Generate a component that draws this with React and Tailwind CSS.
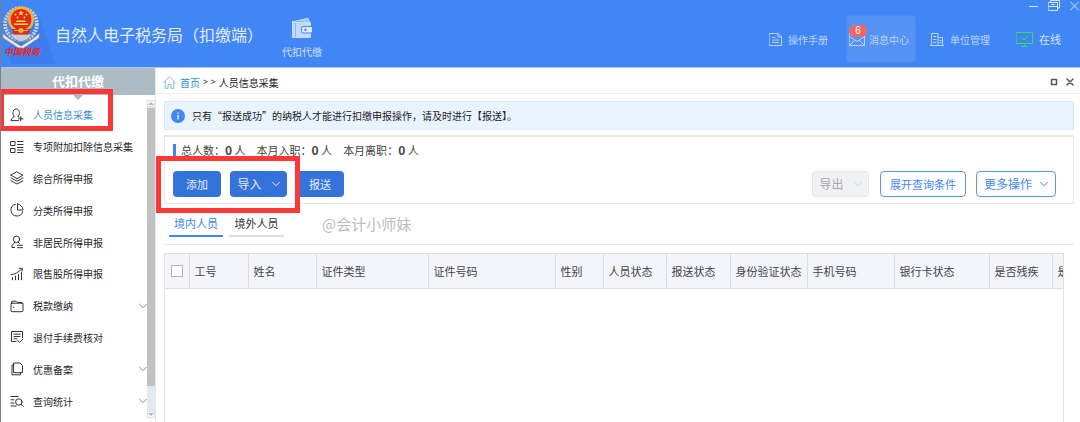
import React from "react";

function Icon({ className = "w-[14px] h-[14px]", children, box = "0 0 14 14", w = 1 }) {
  return (
    <svg
      viewBox={box}
      className={`${className} shrink-0`}
      fill="none"
      stroke="currentColor"
      strokeWidth={w}
      strokeLinecap="round"
      strokeLinejoin="round"
      aria-hidden="true"
    >
      {children}
    </svg>
  );
}

function Chevron({ className = "w-2 h-2" }) {
  return (
    <Icon className={className} box="0 0 8 8">
      <path d="M.5 2.200 4 5.700 7.500 2.200" />
    </Icon>
  );
}

const MENU = [
  {
    label: "人员信息采集",
    active: true,
    icon: (
      <>
        <path d="M4.2 8.3C3.2 7.3 3 6 3 4.7 3 2.6 4.3 1 6.2 1s3.2 1.6 3.2 3.7c0 1.300-.3 2.400-1.200 3.400" />
        <path d="M4.200 8.300C4.400 9.700 1 9.800 1 12.600h7.500M8.200 8.100l.6 1" />
        <path d="M10.800 8.500v4.500M8.500 10.800h4.500" />
      </>
    ),
  },
  {
    label: "专项附加扣除信息采集",
    icon: (
      <>
        <rect x="1" y="1.500" width="4" height="4" />
        <rect x="1" y="8.500" width="4" height="4" />
        <path d="M7.500 1.500h5.500M7.500 4.500h5.500M7.500 7.500h5.500M7.500 10h5.500M7.500 12.500h5.500" />
      </>
    ),
  },
  {
    label: "综合所得申报",
    icon: (
      <>
        <path d="M7 1 13 4.300 7 7.600 1 4.300Z" />
        <path d="M1 7l6 3.200L13 7M1 9.800 7 13l6-3.200" />
      </>
    ),
  },
  {
    label: "分类所得申报",
    icon: (
      <>
        <path d="M5.500 1.200A6 6 0 1 0 12.800 8.500" />
        <path d="M7.500 1v6H13A6 6 0 0 0 7.500 1Z" />
      </>
    ),
  },
  {
    label: "非居民所得申报",
    icon: (
      <>
        <circle cx="6.500" cy="4.300" r="3.200" />
        <path d="M4.800 7.200 2 10.500v2h2.500M8.200 7.200 9.300 8.500M7.500 10.300h5M7.500 12.700h5" />
      </>
    ),
  },
  {
    label: "限售股所得申报",
    icon: (
      <>
        <path d="M2.500 12.800v-2.300M5.500 12.800V9M8.500 12.800V7.500M11.500 12.800V5.500" />
        <path d="M1 7.500c3.500 0 7-1.800 11-5.800M9.500 1.300l2.800.2-.2 2.500" />
      </>
    ),
  },
  {
    label: "税款缴纳",
    more: true,
    icon: (
      <>
        <rect x="1" y="4.200" width="12" height="8.500" rx="1" />
        <path d="M1.200 4.500 2 2.200h4l1 1 5.200.4.500 1M3.300 8.300h.6" />
      </>
    ),
  },
  {
    label: "退付手续费核对",
    icon: (
      <>
        <path d="M6 11.500H1.500V1.500h11v6.200" />
        <path d="M4 4.200h6M4 6.500h6M4 8.800h3M7.500 10.300l2 2.200 3.500-3.500" />
      </>
    ),
  },
  {
    label: "优惠备案",
    more: true,
    icon: (
      <>
        <path d="M4 1h6l2.500 2.500v7.200H4Z" />
        <path d="M3.800 3H2v9.800h8.500v-2" />
      </>
    ),
  },
  {
    label: "查询统计",
    more: true,
    icon: (
      <>
        <path d="M1 2.500h7M1 5.800h3M1 9h3M1 12h5" />
        <circle cx="8.800" cy="8" r="3.200" />
        <path d="m11.200 10.300 2 2.200" />
      </>
    ),
  },
];

function Logo() {
  return (
    <svg viewBox="0 0 54 58" className="absolute left-0 top-0 h-[58px] w-[54px]" aria-hidden="true">
      <path d="M38 10 54 58H10L6 42Z" fill="#3d7cec" />
      <circle cx="20" cy="18" r="16" fill="none" stroke="#c9ced6" strokeWidth="4" strokeDasharray="2 1" />
      <circle cx="20" cy="18" r="18" fill="none" stroke="#6d7890" strokeWidth=".7" strokeDasharray="2 2" />
      <path d="M1 27 9 33l11 7 11-7 8-6-1 5-18 12L2 32Z" fill="#e4e8ec" stroke="#68748c" strokeWidth=".7" />
      <path d="M9 28h22l-4 5-7 3-7-3Z" fill="#c9ced6" stroke="#68748c" strokeWidth=".6" />
      <circle cx="20" cy="13.500" r="13" fill="#e9b53a" />
      <circle cx="20" cy="13.500" r="10.500" fill="#e42a17" />
      <path d="m20 4.500 .9 1.800h2l-1.600 1.300.6 1.900L20 8.400l-1.900 1.100.6-1.900-1.600-1.300h2Z" fill="#ffe14d" />
      <g fill="#ffe14d">
        <circle cx="14.500" cy="8.500" r="1" />
        <circle cx="25.500" cy="8.500" r="1" />
        <circle cx="16.500" cy="11.500" r=".9" />
        <circle cx="23.500" cy="11.500" r=".9" />
        <path d="M16 14.500h8l1 1.500H15ZM13 17.500h14v1.500H13Z" />
      </g>
      <path d="M11 23h18l-2 5.500H13Z" fill="#d92a1b" />
      <path d="M13 24.500h14" stroke="#e9b53a" />
      <circle cx="20" cy="24.500" r="2.500" fill="#e9b53a" />
    </svg>
  );
}

function HeaderLink({ label, children }) {
  return (
    <a href="#" className="flex items-center gap-1.5 text-[10px] text-[#bdd5fc]">
      {children}
      <span>{label}</span>
    </a>
  );
}

function Header() {
  return (
    <header className="flex h-[68px] shrink-0 justify-between border-b border-[#a9c8f8] bg-[#4186f5] text-white">
      <div className="flex">
        <div className="relative mt-[6px] w-[54px]">
          <Logo />
          <span className="absolute left-[3px] top-[40px] whitespace-nowrap text-[9px] font-bold italic leading-3 text-[#e8252a]">
            中国税务
          </span>
        </div>
        <h1 className="self-center text-[16px] leading-6 text-[#e3edfe]">自然人电子税务局（扣缴端）</h1>
        <button type="button" className="ml-[19px] flex flex-col items-center pt-[18px] text-[10px] leading-4 text-[#cfe0fd]">
          <svg viewBox="0 0 22 20" className="h-5 w-[22px]" aria-hidden="true">
            <path d="M3 3.500 17 .3l1.500 4" fill="#9fc3fb" stroke="#cfe0fd" />
            <path d="M1 2.500 4 4h15a1 1 0 0 1 1 1v14a1 1 0 0 1-1 1H2a1 1 0 0 1-1-1Z" fill="#c3dafd" />
            <path d="M4.500 5v14.500" stroke="#8db6f9" />
            <rect x="10.500" y="8.500" width="11" height="6.500" rx="1.500" fill="#dce9fe" stroke="#4186f5" />
            <circle cx="14.500" cy="11.800" r="1.200" fill="#4186f5" />
          </svg>
          <span className="mt-1.5">代扣代缴</span>
        </button>
      </div>

      <div className="flex flex-col items-end">
        <div className="flex h-[15px] items-center gap-2.5 pb-1 pr-px text-[#d6e5fe]">
          <button type="button" aria-label="最小化">
            <Icon className="h-[11px] w-[9px]" box="0 0 9 11"><path d="M.5 6.500h8" /></Icon>
          </button>
          <button type="button" aria-label="还原">
            <Icon className="h-[11px] w-[12px]" box="0 0 12 11">
              <path d="M2.500 2.500v-2h9v7.500h-2M.5 2.500h9v8h-9ZM.5 6.500h9M3.500 4.500h3" />
            </Icon>
          </button>
          <button type="button" aria-label="关闭">
            <Icon className="h-[11px] w-[9px]" box="0 0 9 11"><path d="m.5 2 8 8M8.500 2l-8 8" /></Icon>
          </button>
        </div>
        <nav className="flex h-12 items-stretch pr-[19px]">
          <HeaderLink label="操作手册">
            <Icon className="h-[13px] w-[13px]" box="0 0 13 13">
              <path d="M.5.5h8.500l3.500 3.500V12.500H.5ZM9 .5v3.500h3.500M3.500 4.500h2.500M3.500 7h6M3.500 9.500h6" />
            </Icon>
          </HeaderLink>
          <a
            href="#"
            className="relative ml-[18px] flex items-center gap-1 rounded border border-[#4a8bf2] bg-[#5592f5] pl-0.5 pr-1.5 text-[10px] text-[#bdd5fc]"
          >
            <Icon className="h-[13px] w-4" box="0 0 16 13">
              <path d="M.5.5h15v12H.5ZM.5 3.500 8 8.500l7.500-5M1 12l4.500-4.500M15 12l-4.500-4.500" />
            </Icon>
            <span>消息中心</span>
            <span className="absolute left-0.5 top-[9px] w-[18px] rounded-full bg-[#fb6360] text-center font-['Liberation_Sans'] text-[10px] leading-3 text-white">
              6
            </span>
          </a>
          <div className="ml-[14px] flex">
            <HeaderLink label="单位管理">
              <Icon className="h-[13px] w-[14px]" box="0 0 14 13">
                <path d="M1.500 12V.5h6.500v11.500M8 4.500h4.500V12M.5 12.500h13M3.500 3.500h2.500M3.500 6.500h2.500M3.500 9.500h2.500M10 7.500h1M10 9.500h1" />
              </Icon>
            </HeaderLink>
          </div>
          <div className="ml-[26px] flex items-center gap-1.5 text-[11px] text-[#d3e3fe]">
            <Icon className="h-[15px] w-[17px] text-[#2fe05f]" box="0 0 17 15">
              <path d="M.5.5h16v11h-16ZM8.500 11.500v3M5.500 14.500h6M6 6l2 2 3.500-3.800" />
            </Icon>
            <span>在线</span>
          </div>
        </nav>
      </div>
    </header>
  );
}

function Sidebar() {
  return (
    <aside className="flex w-[155px] shrink-0 flex-col border-r border-[#e4e7ec]">
      <h2 className="relative h-[27px] shrink-0 bg-[#adbbc4] text-center text-[13px] font-bold leading-[25px] text-white">
        代扣代缴
        <span className="absolute left-[71px] top-[26px] border-x-[6px] border-t-[6px] border-x-transparent border-t-[#adbbc4]" />
      </h2>
      <div className="flex min-h-0 flex-1">
        <nav className="flex flex-1 flex-col pb-[5px] pt-1 text-[10px] text-[#1f1f1f]">
          {MENU.map((item) => (
            <a
              key={item.label}
              href="#"
              className={`relative flex flex-1 items-center whitespace-nowrap pl-[9px] ${item.active ? "text-[#3c8fd0]" : ""}`}
            >
              <span className="mr-[9px] text-[#333]">
                <Icon>{item.icon}</Icon>
              </span>
              {item.label}
              {item.more && (
                <span className="ml-auto text-[#8a8a8a]">
                  <Chevron />
                </span>
              )}
              {item.active && (
                <span className="pointer-events-none absolute -left-px -top-[10px] bottom-0 z-10 w-[113px] border-[5px] border-l-4 border-[#fb3838]" />
              )}
            </a>
          ))}
        </nav>
        <div className="mb-1 mt-[5px] flex w-2 flex-col bg-[#e3e9f4]">
          <span className="flex h-[7px] items-center justify-center border border-[#e0e0e0] bg-[#f6f6f6]">
            <span className="border-x-[3px] border-b-[3px] border-x-transparent border-b-[#b5b5b5]" />
          </span>
          <span className="mt-px flex-[11] bg-[#c1c1c1]" />
          <span className="flex-1" />
          <span className="flex h-[7px] items-center justify-center border border-[#e0e0e0] bg-[#f6f6f6]">
            <span className="border-x-[3px] border-t-[3px] border-x-transparent border-t-[#b5b5b5]" />
          </span>
        </div>
      </div>
    </aside>
  );
}

function Breadcrumb() {
  return (
    <div className="flex h-[26px] shrink-0 items-center justify-between border-b border-[#f0f0f0] pl-[7px] pr-1.5 pt-[3px] text-[10px]">
      <div className="flex items-center text-[#222]">
        <Icon className="mr-1 h-[13px] w-[13px] text-[#86b9dc]" box="0 0 13 13">
          <path d="M.7 6.500 6.500.8l5.800 5.700M2.200 5.500v6.800h2.800V8.500h3v3.800h2.800V5.500" />
        </Icon>
        <a href="#" className="text-[#2a97d4]">首页</a>
        <span className="mx-[3px] font-['Noto_Sans'] text-[9px]">&gt;&nbsp;&gt;</span>
        <span>人员信息采集</span>
      </div>
      <div className="flex items-center gap-2 text-[#555]">
        <button type="button" aria-label="最大化">
          <Icon className="h-2 w-2" box="0 0 8 8" w={1.5}><path d="M1.500 1.500h5v5h-5Z" /></Icon>
        </button>
        <button type="button" aria-label="关闭页签">
          <Icon className="h-2 w-2" box="0 0 8 8" w={1.5}><path d="m1 1 6 6M7 1 1 7" /></Icon>
        </button>
      </div>
    </div>
  );
}

function Stat({ label }) {
  return (
    <span>
      {label}：<b className="text-[12px] font-bold">0</b> 人
    </span>
  );
}

function Toolbar() {
  const solid = "h-[26px] rounded bg-[#3473dc] text-[#e6effd]";
  const outline = "h-[26px] rounded border border-[#5c95f7] bg-white text-[#4287f5]";
  return (
    <section className="mt-[5px] border border-t-2 border-[#e8e8e8] px-2 pb-1.5 pt-[5px]">
      <div className="flex h-4 items-center text-[11px] text-[#444]">
        <span className="mr-[5px] h-[13px] w-[3px] bg-[#4186f5]" />
        <div className="flex items-center gap-[11px]">
          <Stat label="总人数" />
          <Stat label="本月入职" />
          <Stat label="本月离职" />
        </div>
      </div>
      <div className="mt-[13px] flex items-center justify-between">
        <div className="flex items-center">
          <div className="relative flex gap-[9px]">
            <button type="button" className={`${solid} w-12 text-[11px]`}>添加</button>
            <button type="button" className={`${solid} flex w-[57px] items-center justify-center gap-2.5 text-[12px]`}>
              导入 <Chevron />
            </button>
            <span className="pointer-events-none absolute -bottom-4 -left-[17px] -right-[13px] -top-[15px] z-10 border-[5px] border-[#fb3838]" />
          </div>
          <button type="button" className={`${solid} ml-[9px] w-12 text-[11px]`}>报送</button>
        </div>
        <div className="mr-[9px] flex items-center">
          <button
            type="button"
            disabled
            className="flex h-[26px] w-[57px] items-center justify-center gap-2.5 rounded-sm border border-[#e4e5e8] bg-[#f0f1f4] text-[12px] text-[#a8a8a8]"
          >
            导出 <span className="text-[#d4d6da]"><Chevron /></span>
          </button>
          <button type="button" className={`${outline} ml-[11px] w-[86px] text-[11px]`}>展开查询条件</button>
          <button type="button" className={`${outline} ml-2.5 flex w-20 items-center justify-center gap-2 text-[12px]`}>
            更多操作 <Chevron />
          </button>
        </div>
      </div>
    </section>
  );
}

function Tabs() {
  return (
    <div className="flex h-[41px] shrink-0 items-center border-b border-[#e6e6e6] pl-[5px] text-[11px]">
      <div role="tablist" className="flex gap-1.5">
        <button type="button" role="tab" aria-selected="true" className="h-[25px] w-[54px] border-b-2 border-[#4186f5] text-[#4186f5]">
          境内人员
        </button>
        <button type="button" role="tab" aria-selected="false" className="h-[25px] w-[55px] border-b-2 border-[#dcdde3] text-[#333]">
          境外人员
        </button>
      </div>
      <span className="ml-[38px] text-[15px] text-[#bcbcbc]">@会计小师妹</span>
    </div>
  );
}

function PeopleTable() {
  const heads = [
    "工号", "姓名", "证件类型", "证件号码", "性别", "人员状态", "报送状态",
    "身份验证状态", "手机号码", "银行卡状态", "是否残疾", "是",
  ];
  return (
    <div className="mr-2.5 mt-2 min-h-0 flex-1 overflow-hidden border-x border-t border-[#dfe0e4]">
      <table className="w-full table-fixed border-collapse text-[11px] text-[#444]">
        <colgroup>
          <col className="w-[24px]" />
          <col className="w-[59px]" />
          <col className="w-[68px]" />
          <col className="w-[112px]" />
          <col className="w-[127px]" />
          <col className="w-[48px]" />
          <col className="w-[63px]" />
          <col className="w-[64px]" />
          <col className="w-[77px]" />
          <col className="w-[87px]" />
          <col className="w-[95px]" />
          <col className="w-[63px]" />
          <col />
        </colgroup>
        <thead>
          <tr className="h-[34px] border-b border-[#dcdde2] bg-[#f3f5fa]">
            <th className="border-r border-[#dcdde2] p-0">
              <input
                type="checkbox"
                aria-label="全选"
                className="mx-auto block h-3 w-3 appearance-none border border-[#b4b4b4] bg-white"
              />
            </th>
            {heads.map((h) => (
              <th
                key={h}
                scope="col"
                className="overflow-hidden whitespace-nowrap border-r border-[#dcdde2] p-0 pl-[5px] text-left font-normal last:border-r-0"
              >
                {h}
              </th>
            ))}
          </tr>
        </thead>
        <tbody />
      </table>
    </div>
  );
}

export default function App() {
  return (
    <div
      lang="zh-CN"
      className="flex h-screen flex-col overflow-hidden border-l border-[#7b8089] bg-white font-['Noto_Sans_CJK_SC',sans-serif]"
    >
      <Header />
      <div className="flex min-h-0 flex-1">
        <Sidebar />
        <main className="flex min-w-0 flex-1 flex-col">
          <Breadcrumb />
          <div className="flex min-h-0 flex-1 flex-col pl-2 pr-1.5 pt-[7px]">
            <div className="flex h-[29px] shrink-0 items-center border border-[#dbe9fa] bg-[#e8f3fe] pl-1.5 text-[10px] text-[#222]">
              <svg viewBox="0 0 14 14" className="mr-[7px] h-[14px] w-[14px]" aria-hidden="true">
                <circle cx="7" cy="7" r="7" fill="#4186f5" />
                <path d="M7 3.500v1.200M7 6v4.500" stroke="#fff" strokeWidth="1.300" />
              </svg>
              只有“报送成功”的纳税人才能进行扣缴申报操作，请及时进行【报送】。
            </div>
            <Toolbar />
            <Tabs />
            <PeopleTable />
          </div>
        </main>
      </div>
    </div>
  );
}
